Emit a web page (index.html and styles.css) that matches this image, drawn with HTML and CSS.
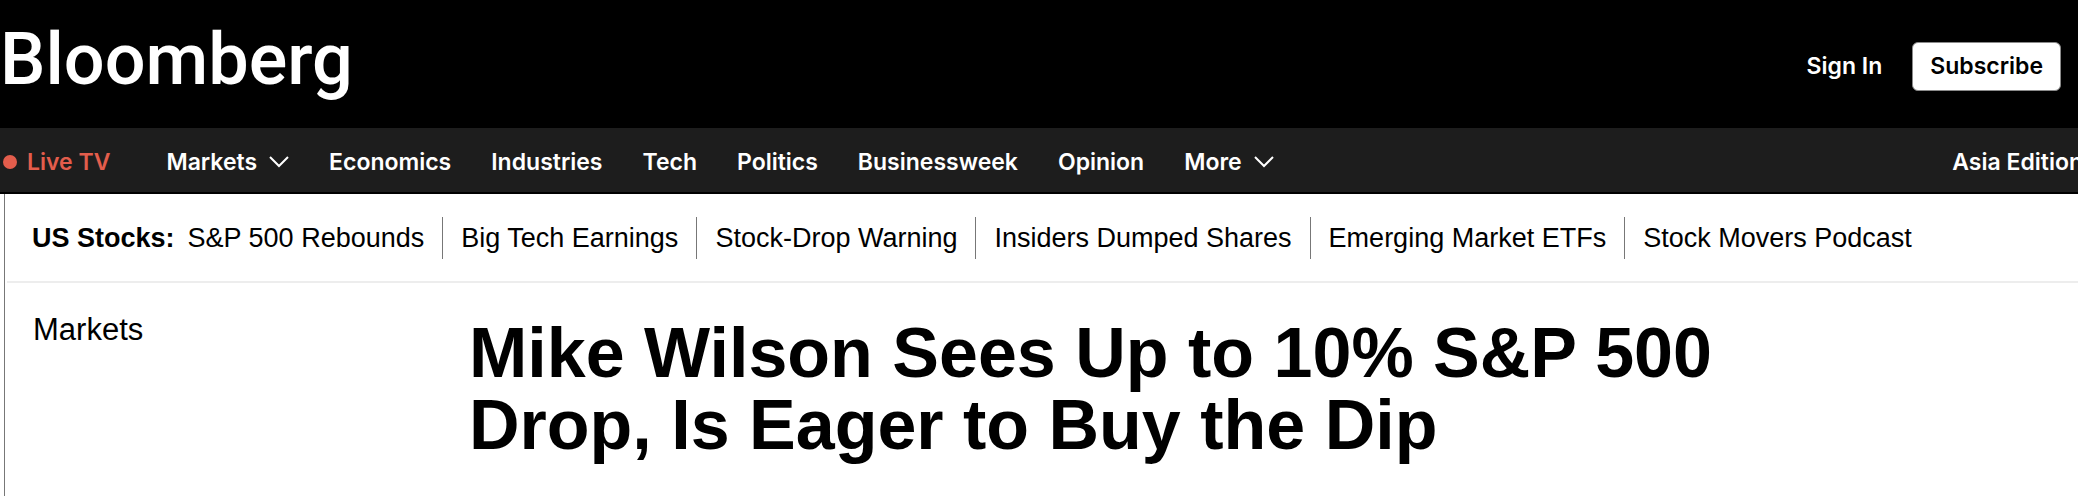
FILE: index.html
```html
<!DOCTYPE html>
<html lang="en">
<head>
    <meta charset="utf-8"/>
    <meta content="width=device-width, initial-scale=1.0" name="viewport"/>
    <title>Mike Wilson Sees Up to 10% S&amp;P 500 Drop - Bloomberg</title>
    <link rel="stylesheet" href="styles.css">
</head>
<body>
    <header class="top-bar">
        <a href="#" class="logo">Bloomberg</a>
        <div class="account">
            <a href="#" class="sign-in">Sign In</a>
            <button type="button" class="subscribe">Subscribe</button>
        </div>
    </header>

    <nav class="main-nav">
        <a href="#" class="live-tv"><span class="dot"></span>Live TV</a>
        <div class="nav-links">
            <a href="#">Markets
                <svg class="chevron" viewBox="0 0 20 12"><path d="M1 1l9 9 9-9"/></svg>
            </a>
            <a href="#">Economics</a>
            <a href="#">Industries</a>
            <a href="#">Tech</a>
            <a href="#">Politics</a>
            <a href="#">Businessweek</a>
            <a href="#">Opinion</a>
            <a href="#">More
                <svg class="chevron" viewBox="0 0 20 12"><path d="M1 1l9 9 9-9"/></svg>
            </a>
        </div>
        <a href="#" class="edition">Asia Edition</a>
    </nav>

    <main class="content">
        <div class="ticker">
            <strong>US Stocks:</strong>
            <ul>
                <li><a href="#">S&amp;P 500 Rebounds</a></li>
                <li><a href="#">Big Tech Earnings</a></li>
                <li><a href="#">Stock-Drop Warning</a></li>
                <li><a href="#">Insiders Dumped Shares</a></li>
                <li><a href="#">Emerging Market ETFs</a></li>
                <li><a href="#">Stock Movers Podcast</a></li>
            </ul>
        </div>

        <article class="article">
            <a href="#" class="section">Markets</a>
            <h1>Mike Wilson Sees Up to 10% S&amp;P 500 Drop, Is Eager to Buy the Dip</h1>
        </article>
    </main>
</body>
</html>
```
FILE: styles.css
```css
* {
    box-sizing: border-box;
}

body {
    margin: 0;
    min-height: 100vh;
    display: flex;
    flex-direction: column;
    font-family: "Liberation Sans", Arial, sans-serif;
    background-color: #ffffff;
    color: #000000;
    overflow-x: hidden;
}

a {
    color: inherit;
    text-decoration: none;
}

.top-bar {
    display: flex;
    align-items: center;
    justify-content: space-between;
    height: 128px;
    padding: 0 17px 0 0;
    background-color: #000000;
    color: #ffffff;
}

.logo {
    font-family: Roboto, sans-serif;
    font-size: 72px;
    font-weight: 500;
    line-height: 84px;
    padding-bottom: 8px;
}

.account {
    display: flex;
    align-items: center;
    gap: 30px;
    padding-top: 4px;
}

.sign-in,
.subscribe,
.main-nav {
    font-family: Inter, sans-serif;
    font-size: 23px;
    font-weight: 600;
}

.subscribe {
    height: 49px;
    padding: 0 17px;
    background-color: #ffffff;
    color: #000000;
    border: 1px solid #8a8a8a;
    border-radius: 6px;
    cursor: pointer;
}

/* navigation */
.main-nav {
    display: flex;
    align-items: center;
    height: 66px;
    padding-top: 3px;
    padding-left: 3px;
    background-color: #1d1d1d;
    color: #ffffff;
    border-bottom: 2px solid #000000;
    white-space: nowrap;
    overflow: hidden;
}

.live-tv {
    display: flex;
    align-items: center;
    gap: 10px;
    margin-right: 56px;
    color: #e35d4c;
}

.dot {
    width: 14px;
    height: 14px;
    border-radius: 50%;
    background-color: #e35d4c;
}

.nav-links {
    display: flex;
    gap: 40px;
}

.nav-links a {
    display: flex;
    align-items: center;
    gap: 12px;
}

.chevron {
    width: 20px;
    height: 12px;
    fill: none;
    stroke: #ffffff;
    stroke-width: 2;
}

.edition {
    margin-left: auto;
    margin-right: -5px;
}

/* page body */
.content {
    flex: 1;
    margin-left: 4px;
    border-left: 1px solid #777777;
}

.ticker {
    display: flex;
    align-items: center;
    height: 89px;
    margin-left: 2px;
    padding-top: 1px;
    padding-left: 25px;
    border-bottom: 2px solid #ededed;
    font-size: 27px;
    white-space: nowrap;
}

.ticker ul {
    display: flex;
    margin: 0;
    padding: 0;
    list-style: none;
}

.ticker li {
    padding: 0 18px;
    line-height: 42px;
}

.ticker li:first-child {
    padding-left: 13px;
}

.ticker li + li {
    border-left: 1px solid #777777;
}

.article {
    display: grid;
    grid-template-columns: 436px minmax(0, 1300px);
    padding: 29px 0 30px 28px;
}

.section {
    font-size: 31px;
    line-height: 36px;
}

.article h1 {
    margin: 5px 0 0;
    font-size: 70px;
    line-height: 72px;
    font-weight: 700;
}
```
